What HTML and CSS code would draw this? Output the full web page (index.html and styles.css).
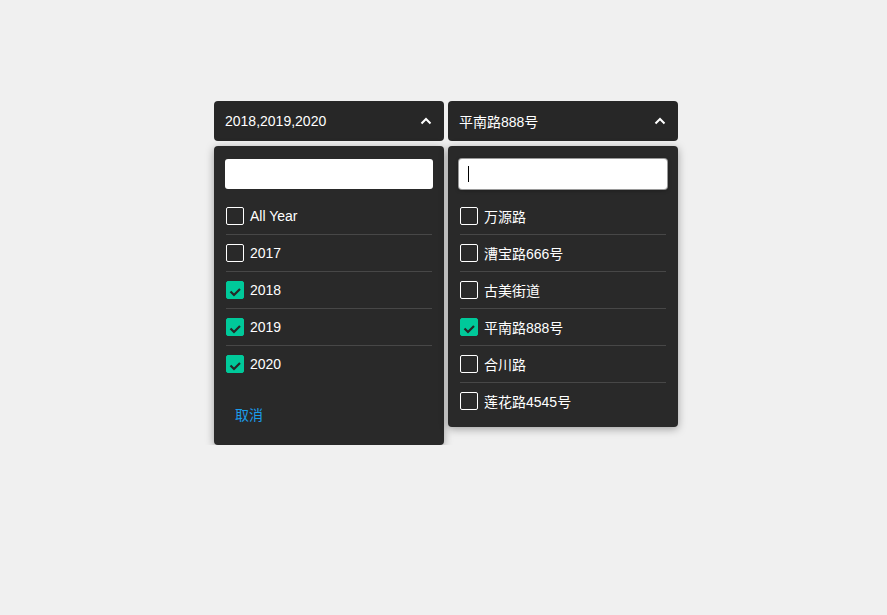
FILE: index.html
```html
<!DOCTYPE html>
<html lang="zh">
<head>
<meta charset="utf-8">
<title>Select</title>
<link rel="stylesheet" href="styles.css">
</head>
<body>
<div class="stage">
  <div class="select">
    <div class="trigger">
      <span class="value">2018,2019,2020</span>
      <svg class="chevron" width="12" height="8" viewBox="0 0 12 8"><polyline points="1.5,6.5 6,2 10.5,6.5" fill="none" stroke="#fff" stroke-width="2"/></svg>
    </div>
    <div class="panel">
      <div class="search"></div>
      <ul class="options">
        <li class="option"><span class="box"></span>All Year</li>
        <li class="option"><span class="box"></span>2017</li>
        <li class="option"><span class="box checked"><svg width="18" height="18" viewBox="0 0 18 18"><polyline points="4.5,10.5 8,14 14,8" fill="none" stroke="#262626" stroke-width="2.2"/></svg></span>2018</li>
        <li class="option"><span class="box checked"><svg width="18" height="18" viewBox="0 0 18 18"><polyline points="4.5,10.5 8,14 14,8" fill="none" stroke="#262626" stroke-width="2.2"/></svg></span>2019</li>
        <li class="option"><span class="box checked"><svg width="18" height="18" viewBox="0 0 18 18"><polyline points="4.5,10.5 8,14 14,8" fill="none" stroke="#262626" stroke-width="2.2"/></svg></span>2020</li>
      </ul>
      <div class="footer"><span class="cancel">取消</span></div>
    </div>
  </div>
  <div class="select">
    <div class="trigger">
      <span class="value">平南路888号</span>
      <svg class="chevron" width="12" height="8" viewBox="0 0 12 8"><polyline points="1.5,6.5 6,2 10.5,6.5" fill="none" stroke="#fff" stroke-width="2"/></svg>
    </div>
    <div class="panel short">
      <div class="search focused"><span class="caret"></span></div>
      <ul class="options">
        <li class="option"><span class="box"></span>万源路</li>
        <li class="option"><span class="box"></span>漕宝路666号</li>
        <li class="option"><span class="box"></span>古美街道</li>
        <li class="option"><span class="box checked"><svg width="18" height="18" viewBox="0 0 18 18"><polyline points="4.5,10.5 8,14 14,8" fill="none" stroke="#262626" stroke-width="2.2"/></svg></span>平南路888号</li>
        <li class="option"><span class="box"></span>合川路</li>
        <li class="option"><span class="box"></span>莲花路4545号</li>
      </ul>
    </div>
  </div>
</div>
</body>
</html>
```

FILE: styles.css
```css
html, body {
  margin: 0;
  padding: 0;
  background: #f0f0f0;
  font-family: "Liberation Sans", "Noto Sans CJK SC", Arial, sans-serif;
  font-size: 14px;
  color: #fff;
}
.stage {
  display: flex;
  gap: 4px;
  padding: 101px 0 0 214px;
  align-items: flex-start;
}
.select {
  width: 230px;
}
.trigger {
  height: 40px;
  box-sizing: border-box;
  background: #272727;
  border-radius: 4px;
  padding: 0 12px 0 11px;
  display: flex;
  align-items: center;
  justify-content: space-between;
}
.chevron {
  display: block;
}
.panel {
  margin-top: 5px;
  background: #292929;
  border-radius: 4px;
  box-shadow: 0 2px 8px rgba(0, 0, 0, 0.35);
  padding: 13px 11px 8px;
}
.search {
  height: 30px;
  background: #fff;
  border-radius: 3px;
  position: relative;
}
.search.focused {
  box-shadow: 0 0 0 1px #9a9a9a, 0 1px 4px rgba(0, 0, 0, 0.4);
}
.caret {
  position: absolute;
  left: 9px;
  top: 7px;
  width: 1px;
  height: 16px;
  background: #000;
}
.options {
  list-style: none;
  margin: 9px 1px 0;
  padding: 0;
}
.option {
  height: 36px;
  display: flex;
  align-items: center;
  border-bottom: 1px solid #474747;
}
.option:last-child {
  border-bottom: none;
}
.box {
  width: 18px;
  height: 18px;
  box-sizing: border-box;
  border: 1px solid #fff;
  border-radius: 2px;
  margin-right: 6px;
  flex: none;
  position: relative;
}
.box.checked {
  background: #00c99a;
  border-color: #00c99a;
}
.box svg {
  position: absolute;
  left: -1px;
  top: -1px;
}
.footer {
  margin-top: 18px;
  margin-bottom: 7px;
}
.cancel {
  display: inline-block;
  height: 30px;
  line-height: 30px;
  padding: 0 10px;
  color: #1b9cea;
}
```
